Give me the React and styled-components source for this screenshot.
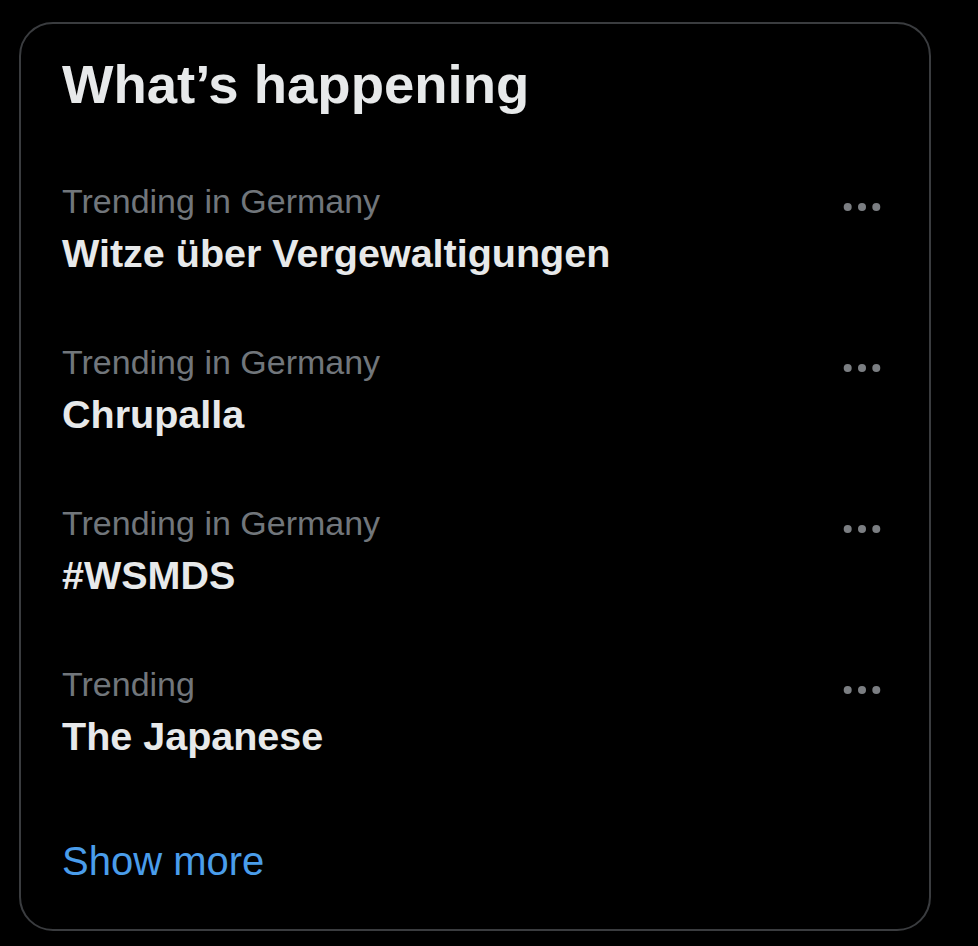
import styled, { createGlobalStyle } from "styled-components";

const trends = [
  { context: "Trending in Germany", title: "Witze über Vergewaltigungen" },
  { context: "Trending in Germany", title: "Chrupalla" },
  { context: "Trending in Germany", title: "#WSMDS" },
  { context: "Trending", title: "The Japanese" },
];

const GlobalStyle = createGlobalStyle`
  html, body {
    margin: 0;
    padding: 0;
    background: #000;
  }

  body {
    font-family: "Liberation Sans", Arial, sans-serif;
    -webkit-font-smoothing: antialiased;
  }
`;

const MoreIcon = () => (
  <svg width="38" height="20" viewBox="0 0 38 20" aria-hidden="true">
    <circle cx="4.7" cy="10" r="4" fill="#7b7e82" />
    <circle cx="19" cy="10" r="4" fill="#7b7e82" />
    <circle cx="33.3" cy="10" r="4" fill="#7b7e82" />
  </svg>
);

const App = () => {
  return (
    <>
      <GlobalStyle />
      <Page>
        <Card>
          <Header>What’s happening</Header>

          {/* Trend rows */}
          <TrendList>
            {trends.map((trend, index) => (
              <TrendRow key={index}>
                <TrendText>
                  <TrendContext>{trend.context}</TrendContext>
                  <TrendTitle>{trend.title}</TrendTitle>
                </TrendText>
                <MoreButton type="button" aria-label="More">
                  <MoreIcon />
                </MoreButton>
              </TrendRow>
            ))}
          </TrendList>

          <ShowMore href="#">Show more</ShowMore>
        </Card>
      </Page>
    </>
  );
};

const Page = styled.main`
  min-height: 946px;
  padding: 22px 0 0 19px;
  box-sizing: border-box;
  background: #000;
`;

const Card = styled.section`
  width: 912px;
  box-sizing: border-box;
  border: 2px solid #3a3c3f;
  border-radius: 34px;
  padding: 0 48px 45px 41px;
  display: flex;
  flex-direction: column;
`;

const Header = styled.h2`
  margin: 29px 0 0;
  font-size: 54.5px;
  line-height: 64px;
  font-weight: 700;
  color: #e7e9ea;
`;

const TrendList = styled.div`
  margin-top: 31px;
  display: flex;
  flex-direction: column;
`;

const TrendRow = styled.div`
  display: flex;
  justify-content: space-between;
  align-items: flex-start;
  padding: 33px 0;
`;

const TrendText = styled.div`
  display: flex;
  flex-direction: column;
`;

const TrendContext = styled.span`
  font-size: 34px;
  line-height: 40px;
  color: #71767b;
`;

const TrendTitle = styled.span`
  margin-top: 9px;
  font-size: 39.5px;
  line-height: 46px;
  font-weight: 700;
  color: #e7e9ea;
`;

const MoreButton = styled.button`
  margin-top: 16px;
  padding: 0;
  border: none;
  background: transparent;
  display: flex;
  cursor: pointer;
`;

const ShowMore = styled.a`
  margin-top: 46px;
  font-size: 40px;
  line-height: 46px;
  color: #4a9deb;
  text-decoration: none;
  align-self: flex-start;
`;

export default App;
